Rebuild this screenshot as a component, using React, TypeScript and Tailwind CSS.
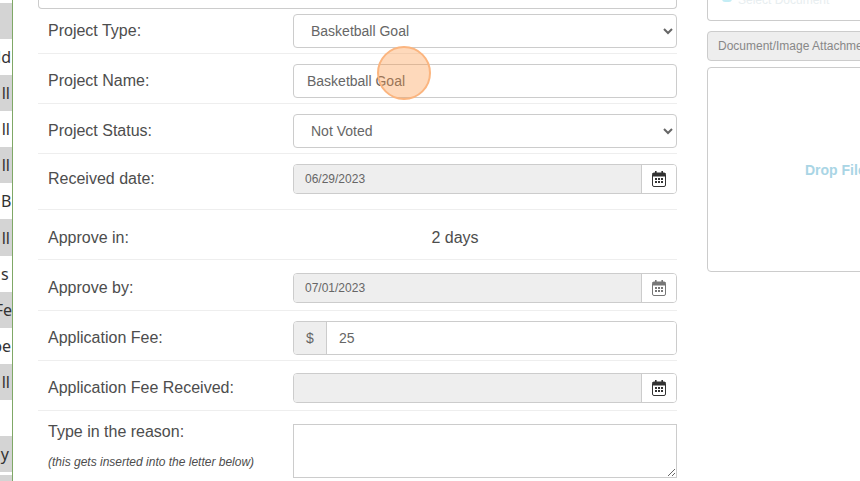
const sideRows = [
  { text: '', cls: 'h-[36px] bg-[#d4d4d4] justify-end' },
  { text: 'dd', cls: 'h-[36px] bg-white justify-end pr-[1px]' },
  { text: 'll', cls: 'h-[36px] bg-[#d4d4d4] justify-end pr-[2px]' },
  { text: 'll', cls: 'h-[36px] bg-white justify-end pr-[2px]' },
  { text: 'll', cls: 'h-[36px] bg-[#d4d4d4] justify-end pr-[2px]' },
  { text: 'Bl', cls: 'h-[36px] bg-white justify-start pl-[1px]' },
  { text: 'll', cls: 'h-[37px] bg-[#d4d4d4] justify-end pr-[2px]' },
  { text: 's', cls: 'h-[36px] bg-white justify-start pl-[1px]' },
  { text: 'Fe', cls: 'h-[36px] bg-[#d4d4d4] justify-end' },
  { text: 'be', cls: 'h-[36px] bg-white justify-end pr-[1px]' },
  { text: 'll', cls: 'h-[36px] bg-[#d4d4d4] justify-end pr-[2px]' },
  { text: '', cls: 'h-[36px] bg-white justify-end' },
  { text: 'y', cls: 'h-[36px] bg-[#d4d4d4] justify-end pr-[3px]' },
];

function CalendarIcon({ muted }: { muted?: boolean }) {
  const color = muted ? '#777777' : '#333333';
  return (
    <svg width="14" height="16" viewBox="0 0 14 16" fill="none">
      <rect x="3" y="0" width="1.6" height="3.5" fill={color} />
      <rect x="9.4" y="0" width="1.6" height="3.5" fill={color} />
      <path d="M0.5 3.5 Q0.5 2 2 2 H12 Q13.5 2 13.5 3.5 V14 Q13.5 15.5 12 15.5 H2 Q0.5 15.5 0.5 14 Z" fill="#ffffff" stroke={color} />
      <rect x="0.5" y="2" width="13" height="3.5" fill={color} />
      {[3, 6, 9].map((x) =>
        [7, 10].map((y) => <rect key={`${x}-${y}`} x={x} y={y} width="2" height="2" fill={color} />)
      )}
    </svg>
  );
}

function DateInput({ value, muted }: { value: string; muted?: boolean }) {
  return (
    <div className="flex h-[30px] w-[384px] rounded-[4px] border border-[#cccccc] overflow-hidden">
      <div className="flex-1 bg-[#eeeeee] pl-[11px] text-[12px] leading-[28px] text-[#666666]">{value}</div>
      <div className="flex w-[35px] items-center justify-center border-l border-[#cccccc] bg-white">
        <CalendarIcon muted={muted} />
      </div>
    </div>
  );
}

function SelectInput({ value }: { value: string }) {
  return (
    <select
      defaultValue={value}
      className="block h-[34px] w-[384px] rounded-[4px] border border-[#cccccc] bg-white pl-[13px] text-[14px] text-[#666666] [appearance:auto]"
    >
      <option>{value}</option>
    </select>
  );
}

function Label({ children }: { children: string }) {
  return <div className="w-[255px] pl-[10px] text-[16px] leading-[22px] text-[#4d4d4d]">{children}</div>;
}

export default function App() {
  return (
    <div className="relative flex h-[481px] w-[860px] overflow-hidden bg-white font-['Liberation_Sans',Arial,sans-serif]">
      {/* sidebar, only the cut-off right edge is visible */}
      <div className="w-[13px] shrink-0 border-r border-[#7fa866] pt-[3px] font-['Noto_Sans',sans-serif] text-[16px] text-[#333333]">
        {sideRows.map((row, i) => (
          <div key={i} className={`flex items-center overflow-hidden whitespace-nowrap ${row.cls}`}>
            {row.text}
          </div>
        ))}
        <div className="mt-[3px] h-[10px] bg-[#d4d4d4]" />
      </div>

      {/* form */}
      <div className="ml-[25px] w-[639px] shrink-0">
        <div className="h-[9px] rounded-b-[4px] border border-t-0 border-[#cccccc]" />

        <div className="flex items-center border-b border-[#eeeeee] pt-[5px] pb-[5px]">
          <Label>Project Type:</Label>
          <SelectInput value="Basketball Goal" />
        </div>

        <div className="flex items-center border-b border-[#eeeeee] pt-[10px] pb-[5px]">
          <Label>Project Name:</Label>
          <input
            defaultValue="Basketball Goal"
            className="h-[34px] w-[384px] rounded-[4px] border border-[#cccccc] bg-white px-[13px] text-[14px] text-[#666666]"
          />
        </div>

        <div className="flex items-center border-b border-[#eeeeee] pt-[10px] pb-[5px]">
          <Label>Project Status:</Label>
          <SelectInput value="Not Voted" />
        </div>

        <div className="flex items-center border-b border-[#eeeeee] pt-[10px] pb-[15px]">
          <Label>Received date:</Label>
          <DateInput value="06/29/2023" />
        </div>

        <div className="flex h-[50px] items-center border-b border-[#eeeeee] pt-[6px]">
          <Label>Approve in:</Label>
          <div className="w-[324px] text-center text-[16px] text-[#4d4d4d]">2 days</div>
        </div>

        <div className="flex items-center border-b border-[#eeeeee] pt-[13px] pb-[7px]">
          <Label>Approve by:</Label>
          <DateInput value="07/01/2023" muted />
        </div>

        <div className="flex items-center border-b border-[#eeeeee] pt-[10px] pb-[5px]">
          <Label>Application Fee:</Label>
          <div className="flex h-[34px] w-[384px] overflow-hidden rounded-[4px] border border-[#cccccc]">
            <div className="w-[33px] border-r border-[#cccccc] bg-[#eeeeee] text-center text-[14px] leading-[32px] text-[#666666]">$</div>
            <div className="flex-1 bg-white pl-[12px] text-[14px] leading-[32px] text-[#666666]">25</div>
          </div>
        </div>

        <div className="flex items-center border-b border-[#eeeeee] pt-[12px] pb-[7px]">
          <Label>Application Fee Received:</Label>
          <DateInput value="" />
        </div>

        <div className="flex pt-[13px]">
          <div className="w-[255px] pl-[10px] text-[#4d4d4d]">
            <div className="-mt-[3px] text-[16px] leading-[22px]">Type in the reason:</div>
            <div className="mt-[11px] text-[12px] italic leading-[16px]">(this gets inserted into the letter below)</div>
          </div>
          <textarea className="h-[54px] w-[384px] border border-[#cccccc] bg-white" />
        </div>
      </div>

      {/* attachments column */}
      <div className="ml-[30px] w-[296px] shrink-0">
        <div className="flex h-[21px] items-end gap-[6px] rounded-b-[4px] border border-t-0 border-[#cccccc] pl-[14px]">
          <div className="mb-[18px] h-[3px] w-[10px] rounded-b-full bg-[#c4edf5]" />
          <div className="mb-[17px] text-[12px] leading-[5px] text-[#e8eef0]">Select Document</div>
        </div>
        <div className="mt-[10px] h-[30px] rounded-[4px] border border-[#cccccc] bg-[#eeeeee] pl-[10px] text-[12px] leading-[28px] text-[#888888]">
          Document/Image Attachments
        </div>
        <div className="mt-[6px] flex h-[205px] items-center rounded-[4px] border border-[#cccccc] pt-[2px] pl-[97px]">
          <span className="text-[14px] font-bold text-[#a9d5e5]">Drop Files Here</span>
        </div>
      </div>

      {/* click marker */}
      <div className="absolute left-[377px] top-[46px] h-[54px] w-[54px] rounded-full border-2 border-[#fbb57f] bg-[#fb923c]/35" />
    </div>
  );
}
